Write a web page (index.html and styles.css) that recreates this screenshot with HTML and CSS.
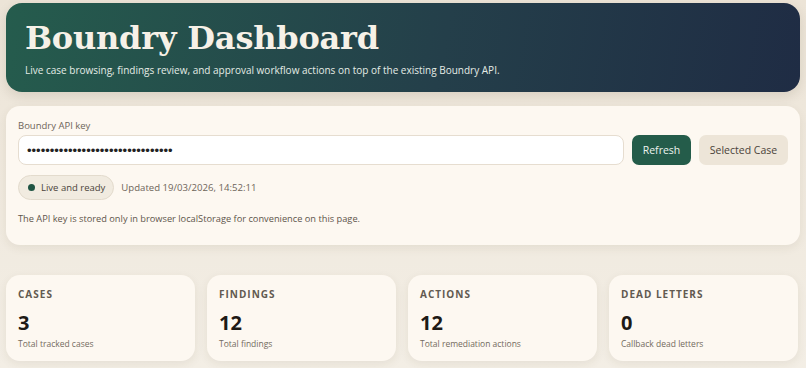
FILE: index.html
```html
<!DOCTYPE html>
<html lang="en">
<head>
    <meta charset="UTF-8">
    <meta name="viewport" content="width=device-width, initial-scale=1.0">
    <title>Boundry Dashboard</title>
    <link rel="stylesheet" href="styles.css">
</head>

<body>

<div class="page">
    <header class="hero">
        <h1>Boundry Dashboard</h1>
        <p>Live case browsing, findings review, and approval workflow actions on top of the existing Boundry API.</p>
    </header>

    <section class="panel">
        <label class="field-label" for="apiKey">Boundry API key</label>
        <div class="key-row">
            <input type="password" id="apiKey" value="12345678901234567890123456789012">
            <button class="btn-primary">Refresh</button>
            <button class="btn-soft">Selected Case</button>
        </div>
        <div class="status-row">
            <span class="pill"><span class="dot"></span>Live and ready</span>
            <span class="updated">Updated 19/03/2026, 14:52:11</span>
        </div>
        <p class="note">The API key is stored only in browser localStorage for convenience on this page.</p>
    </section>

    <section class="stats">
        <div class="stat">
            <div class="stat-label">Cases</div>
            <div class="stat-value">3</div>
            <div class="stat-sub">Total tracked cases</div>
        </div>
        <div class="stat">
            <div class="stat-label">Findings</div>
            <div class="stat-value">12</div>
            <div class="stat-sub">Total findings</div>
        </div>
        <div class="stat">
            <div class="stat-label">Actions</div>
            <div class="stat-value">12</div>
            <div class="stat-sub">Total remediation actions</div>
        </div>
        <div class="stat">
            <div class="stat-label">Dead letters</div>
            <div class="stat-value">0</div>
            <div class="stat-sub">Callback dead letters</div>
        </div>
    </section>
</div>

</body>
</html>
```

FILE: styles.css
```css
* {
    box-sizing: border-box;
    margin: 0;
    padding: 0;
}

body {
    background: linear-gradient(180deg, #ece4d7 0%, #f3eee5 100%);
    font-family: "Open Sans", "Noto Sans", sans-serif;
    color: #2b2620;
    height: 100vh;
    overflow: hidden;
}

.page {
    padding: 3px 6px 0 6px;
}

/* Hero */
.hero {
    background: linear-gradient(100deg, #255c4d 0%, #243f4a 55%, #1f2c44 100%);
    color: #f6f1e7;
    border-radius: 16px;
    height: 89px;
    padding: 16px 19px 0 19px;
    box-shadow: 0 4px 12px rgba(60, 45, 20, 0.12);
}

.hero h1 {
    font-family: "DejaVu Serif", Georgia, serif;
    font-size: 32px;
    font-weight: bold;
    line-height: 39px;
    letter-spacing: -0.2px;
}

.hero p {
    font-size: 10px;
    margin-top: 5px;
    color: #e4ece6;
}

/* API key panel */
.panel {
    background: #fdf8f1;
    border-radius: 14px;
    margin-top: 14px;
    height: 139px;
    padding: 14px 12px;
    box-shadow: 0 3px 10px rgba(80, 60, 30, 0.08);
}

.field-label {
    display: block;
    font-size: 9.5px;
    color: #6e655a;
    line-height: 12px;
}

.key-row {
    display: flex;
    align-items: center;
    gap: 8px;
    margin-top: 3px;
}

.key-row input {
    flex: 1;
    height: 30px;
    border: 1px solid #e6ddd0;
    border-radius: 8px;
    background: #fff;
    padding: 0 8px;
    font-size: 13px;
    color: #222;
}

button {
    height: 30px;
    border: none;
    border-radius: 7px;
    font-family: "Open Sans", "Noto Sans", sans-serif;
    font-size: 10.5px;
    cursor: pointer;
}

.btn-primary {
    background: #245c4a;
    color: #eef3ee;
    width: 59px;
}

.btn-soft {
    background: #ede5d8;
    color: #4a433a;
    width: 89px;
}

.status-row {
    display: flex;
    align-items: center;
    gap: 7px;
    margin-top: 10px;
}

.pill {
    display: inline-flex;
    align-items: center;
    gap: 6px;
    height: 25px;
    padding: 0 8px 0 9px;
    border: 1px solid #e3dbcd;
    background: #f1ebe0;
    border-radius: 13px;
    font-size: 9.5px;
    color: #4a433a;
}

.dot {
    width: 7px;
    height: 7px;
    border-radius: 50%;
    background: #1f5443;
}

.updated {
    font-size: 9.6px;
    color: #6e655a;
}

.note {
    font-size: 9.25px;
    color: #5d554b;
    margin-top: 12px;
}

/* Stats */
.stats {
    display: grid;
    grid-template-columns: repeat(4, 1fr);
    gap: 12px;
    margin-top: 30px;
    width: 792px;
}

.stat {
    background: #fdf8f1;
    border-radius: 14px;
    height: 86px;
    padding: 13px 12px 0 12px;
    box-shadow: 0 3px 10px rgba(80, 60, 30, 0.08);
}

.stat-label {
    font-size: 10px;
    font-weight: bold;
    letter-spacing: 1px;
    text-transform: uppercase;
    color: #625a50;
    line-height: 12px;
}

.stat-value {
    font-size: 20px;
    font-weight: bold;
    color: #1e1a16;
    margin-top: 11px;
    line-height: 24px;
}

.stat-sub {
    font-size: 8.5px;
    color: #746b60;
    margin-top: 3px;
}
```
